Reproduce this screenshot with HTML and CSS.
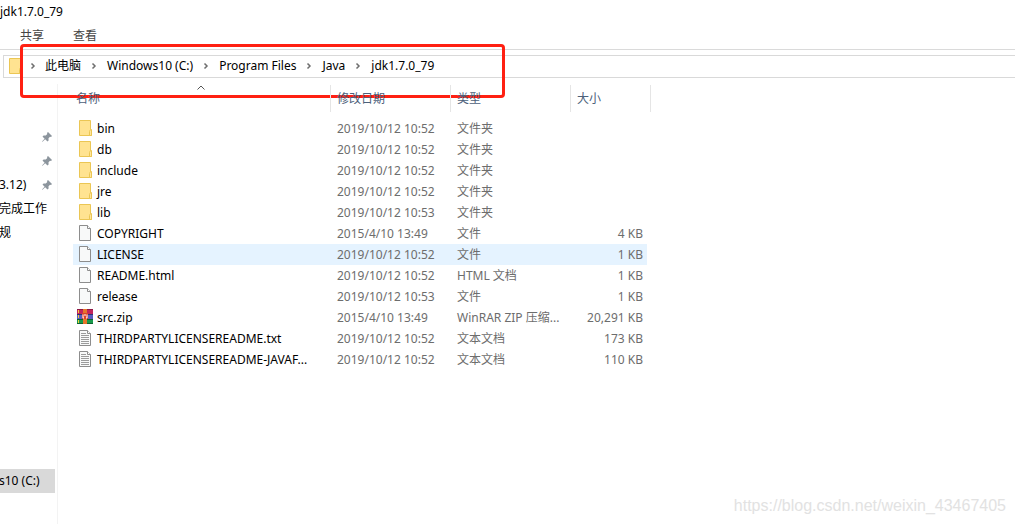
FILE: index.html
```html
<!DOCTYPE html>
<html lang="zh-CN">
<head>
<meta charset="utf-8">
<title>jdk1.7.0_79</title>
<link rel="stylesheet" href="styles.css">
</head>
<body>
<svg class="defs" aria-hidden="true">
  <symbol id="folder" viewBox="0 0 16 16">
    <path d="M2.500.5h11v10.500h1v4.500h-12z" fill="#ffe391" stroke="#ebc654"/>
    <path d="M12.500 15.500v-4l1-2h1v6z" fill="#ffe79f" stroke="#ebc654"/>
  </symbol>
  <symbol id="file" viewBox="0 0 16 16">
    <path d="M2.500.5h8l3 3v12h-11z" fill="#f8f9f9" stroke="#8d8d8d"/>
    <path d="M10.500.5v3h3" fill="#fff" stroke="#8d8d8d"/>
  </symbol>
  <symbol id="text" viewBox="0 0 16 16">
    <path d="M2.500.5h8l3 3v12h-11z" fill="#f8f9f9" stroke="#8d8d8d"/>
    <path d="M10.500.5v3h3" fill="#fff" stroke="#8d8d8d"/>
    <path d="M4 3.500h5M4 5.500h8M4 7.500h8M4 9.500h8M4 11.500h8M4 13.500h8" stroke="#9b9b9b"/>
  </symbol>
  <symbol id="zip" viewBox="0 0 16 16">
    <path d="M0 0h16v5H0z" fill="#c2255c"/><path d="M0 0h16v1H0z" fill="#8e1844"/>
    <path d="M0 5h16v5H0z" fill="#5a5cc0"/><path d="M0 5h16v1H0z" fill="#31336f"/>
    <path d="M0 10h16v5H0z" fill="#189b4b"/><path d="M0 10h16v1H0zM0 14h16v1H0z" fill="#0c6330"/>
    <path d="M1 1h1v3H1zM1 6h1v3H1zM1 11h1v3H1z" fill="#f3cf3c"/>
    <path d="M6 0h4v15H6z" fill="#e8752a"/>
    <path d="M5 4h6v6H5z" fill="#d9442a"/>
    <path d="M6 9V5.500M10 9V5.500M6 9h1M9 9h1M8 5v2" fill="none" stroke="#fff"/>
  </symbol>
  <symbol id="pin" viewBox="0 0 12 12">
    <path d="M7 1l4 4-1 1-1-.3L7.500 7.300 7.600 9.500 6.500 10.500 4.200 8.300 1.500 10.800 1 10.500 3.600 7.700 1.500 5.500 2.600 4.400 4.800 4.600 6.300 3 6 2z" fill="#8c959d"/>
  </symbol>
  <symbol id="chevron" viewBox="0 0 6 8">
    <path d="M1.500 1.500L4 4 1.500 6.500" fill="none" stroke="#6e6e6e" stroke-width="1.500"/>
  </symbol>
</svg>

<header class="titlebar"><h1 class="title">jdk1.7.0_79</h1></header>
<nav class="ribbon">
  <button class="tab">共享</button>
  <button class="tab">查看</button>
</nav>
<nav class="address" aria-label="地址">
  <svg class="icon"><use href="#folder"/></svg>
  <svg class="chevron first"><use href="#chevron"/></svg>
  <a class="crumb" href="#">此电脑</a>
  <svg class="chevron"><use href="#chevron"/></svg>
  <a class="crumb" href="#">Windows10 (C:)</a>
  <svg class="chevron"><use href="#chevron"/></svg>
  <a class="crumb" href="#">Program Files</a>
  <svg class="chevron"><use href="#chevron"/></svg>
  <a class="crumb" href="#">Java</a>
  <svg class="chevron"><use href="#chevron"/></svg>
  <a class="crumb" href="#">jdk1.7.0_79</a>
</nav>
<div class="highlight"></div>

<main class="content">
  <aside class="sidebar">
    <div class="place"><svg class="pin"><use href="#pin"/></svg></div>
    <div class="place"><svg class="pin"><use href="#pin"/></svg></div>
    <div class="place"><a class="place-name" href="#">3.12)</a><svg class="pin"><use href="#pin"/></svg></div>
    <div class="place"><a class="place-name" href="#">完成工作</a></div>
    <div class="place"><a class="place-name" href="#">规</a></div>
    <div class="place current"><a class="place-name" href="#">s10 (C:)</a></div>
  </aside>
  <section class="listing">
    <table class="files">
      <colgroup><col class="c-name"><col class="c-date"><col class="c-type"><col class="c-size"><col class="c-end"></colgroup>
      <thead>
        <tr>
          <th><button class="sort">名称<svg class="caret" viewBox="0 0 8 5"><path d="M.5 4.500L4 1l3.500 3.500" fill="none" stroke="#555"/></svg></button></th>
          <th><button class="sort">修改日期</button></th>
          <th><button class="sort">类型</button></th>
          <th colspan="2"><button class="sort">大小</button></th>
        </tr>
      </thead>
      <tbody>
        <tr><td><div class="name"><svg class="icon"><use href="#folder"/></svg><span>bin</span></div></td><td>2019/10/12 10:52</td><td>文件夹</td><td></td></tr>
        <tr><td><div class="name"><svg class="icon"><use href="#folder"/></svg><span>db</span></div></td><td>2019/10/12 10:52</td><td>文件夹</td><td></td></tr>
        <tr><td><div class="name"><svg class="icon"><use href="#folder"/></svg><span>include</span></div></td><td>2019/10/12 10:52</td><td>文件夹</td><td></td></tr>
        <tr><td><div class="name"><svg class="icon"><use href="#folder"/></svg><span>jre</span></div></td><td>2019/10/12 10:52</td><td>文件夹</td><td></td></tr>
        <tr><td><div class="name"><svg class="icon"><use href="#folder"/></svg><span>lib</span></div></td><td>2019/10/12 10:53</td><td>文件夹</td><td></td></tr>
        <tr><td><div class="name"><svg class="icon"><use href="#file"/></svg><span>COPYRIGHT</span></div></td><td>2015/4/10 13:49</td><td>文件</td><td class="size">4 KB</td></tr>
        <tr class="selected"><td><div class="name"><svg class="icon"><use href="#file"/></svg><span>LICENSE</span></div></td><td>2019/10/12 10:52</td><td>文件</td><td class="size">1 KB</td></tr>
        <tr><td><div class="name"><svg class="icon"><use href="#file"/></svg><span>README.html</span></div></td><td>2019/10/12 10:52</td><td>HTML 文档</td><td class="size">1 KB</td></tr>
        <tr><td><div class="name"><svg class="icon"><use href="#file"/></svg><span>release</span></div></td><td>2019/10/12 10:53</td><td>文件</td><td class="size">1 KB</td></tr>
        <tr><td><div class="name"><svg class="icon"><use href="#zip"/></svg><span>src.zip</span></div></td><td>2015/4/10 13:49</td><td>WinRAR ZIP 压缩...</td><td class="size">20,291 KB</td></tr>
        <tr><td><div class="name"><svg class="icon"><use href="#text"/></svg><span>THIRDPARTYLICENSEREADME.txt</span></div></td><td>2019/10/12 10:52</td><td>文本文档</td><td class="size">173 KB</td></tr>
        <tr><td><div class="name"><svg class="icon"><use href="#text"/></svg><span>THIRDPARTYLICENSEREADME-JAVAF...</span></div></td><td>2019/10/12 10:52</td><td>文本文档</td><td class="size">110 KB</td></tr>
      </tbody>
    </table>
    <p class="watermark">https://blog.csdn.net/weixin_43467405</p>
  </section>
</main>
</body>
</html>
```

FILE: styles.css
```css
* { box-sizing: border-box; }
body {
  margin: 0;
  min-height: 100vh;
  display: flex;
  flex-direction: column;
  background: #fff;
  color: #000;
  font: 12px/20px "Noto Sans", "Noto Sans CJK SC", sans-serif;
  overflow: hidden;
}
button { border: 0; padding: 0; background: none; font: inherit; text-align: left; }
a { color: inherit; text-decoration: none; white-space: nowrap; }
.defs { position: absolute; width: 0; height: 0; }
.icon { width: 16px; height: 16px; flex: none; }

.titlebar { height: 24px; padding-top: 2px; }
.title { margin: 0; font-size: 12px; font-weight: 400; }
.ribbon {
  display: flex;
  gap: 29px;
  height: 26px;
  padding: 2px 20px 0;
  border-bottom: 1px solid #dadada;
}
.tab { height: 20px; color: #444; }
.address {
  display: flex;
  align-items: center;
  height: 23px;
  margin: 5px 0 0 3px;
  padding: 0 0 1px 3px;
  border: 1px solid #d9d9d9;
  border-right: 0;
}
.chevron { width: 6px; height: 8px; margin: 0 10px; flex: none; }
.chevron.first { margin: 0 9px 0 7px; }
.highlight {
  position: absolute;
  left: 20px;
  top: 44px;
  width: 485px;
  height: 54px;
  border: 3px solid #ff2012;
  border-radius: 4px;
}

.content { flex: 1; display: flex; margin-top: 6px; }
.sidebar { width: 58px; flex: none; padding: 41px 2px 0 0; border-right: 1px solid #f3f3f3; }
.place { display: flex; align-items: center; height: 24px; padding-right: 2px; }
.place-name { flex: none; margin-left: -1px; }
.pin { width: 12px; height: 12px; margin-left: auto; flex: none; }
.place.current { margin-top: 224px; background: #d9d9d9; }

.listing { flex: 1; display: flex; flex-direction: column; padding-left: 15px; }
.files { width: 578px; table-layout: fixed; border-collapse: collapse; }
.c-name { width: 258px; }
.c-date, .c-type { width: 120px; }
.c-size { width: 76px; }
.c-end { width: 4px; }
.files th { height: 34px; padding: 1px 0 0; vertical-align: top; font-weight: 400; color: #4c607a; }
.sort {
  position: relative;
  display: block;
  width: 100%;
  height: 27px;
  padding-left: 6px;
  border-right: 1px solid #e5e5e5;
  color: inherit;
}
th:first-child .sort { padding-left: 3px; }
.caret { position: absolute; left: calc(50% - 5px); top: 0; width: 8px; height: 5px; }
.files td { height: 21px; padding: 0 0 0 6px; color: #6d6d6d; white-space: nowrap; }
.files td:first-child { padding-left: 4px; color: #000; }
.files .size { padding-right: 4px; text-align: right; }
.name { display: flex; align-items: flex-start; gap: 4px; }
.name .icon { margin-top: 1px; }
.selected td { background: #e5f3ff; }
.watermark {
  margin: auto 9px 8px auto;
  color: #e2e2e2;
  font-family: "Liberation Sans", sans-serif;
  font-size: 16px;
}
```
